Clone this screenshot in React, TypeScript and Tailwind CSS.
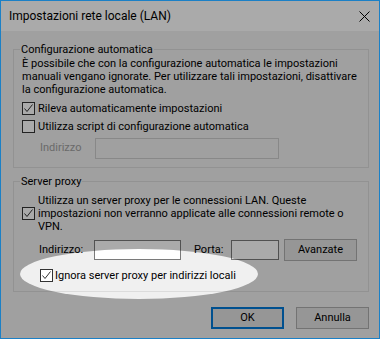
import React from 'react';

function CheckBox({ checked }: { checked?: boolean }) {
    return (
        <span className="flex h-[13px] w-[13px] shrink-0 items-center justify-center border border-[#333333] bg-white">
            {checked && (
                <svg width="11" height="11" viewBox="0 0 11 11">
                    <path d="M1.5 5.5 L4 8.5 L9.5 1.5" fill="none" stroke="#333333" strokeWidth="1" />
                </svg>
            )}
        </span>
    );
}

function Button({ label, primary }: { label: string; primary?: boolean }) {
    return (
        <div
            className={
                primary
                    ? 'flex h-[22px] w-[73px] items-center justify-center border-2 border-[#0078d7] bg-[#e1e1e1]'
                    : 'flex h-[22px] w-[73px] items-center justify-center border border-[#adadad] bg-[#e1e1e1]'
            }
        >
            {label}
        </div>
    );
}

export default function App() {
    return (
        <div
            className="relative flex h-[339px] w-[380px] flex-col overflow-hidden border border-[#1b80c6] bg-[#f0f0f0] text-[11px] text-black"
            style={{ fontFamily: 'Roboto, "Noto Sans", sans-serif' }}
        >
            {/* Title bar */}
            <div className="flex h-[30px] shrink-0 items-center justify-between bg-white pl-[8px] pr-[9px]">
                <span className="text-[12px] leading-[15px]">Impostazioni rete locale (LAN)</span>
                <svg width="11" height="11" viewBox="0 0 11 11">
                    <path d="M0.5 0.5 L10.5 10.5 M10.5 0.5 L0.5 10.5" stroke="#000" strokeWidth="1" />
                </svg>
            </div>

            <div className="flex flex-col pl-[12px] pr-[10px]">
                {/* Automatic configuration */}
                <fieldset className="mt-[11px] border border-[#dcdcdc] px-0 pb-[8px]">
                    <legend className="ml-[6px] px-[1px] leading-[15px]">Configurazione automatica</legend>
                    <div className="flex flex-col pl-[8px]">
                        <p className="whitespace-nowrap leading-[13px]">
                            È possibile che con la configurazione automatica le impostazioni
                            <br />
                            manuali vengano ignorate. Per utilizzare tali impostazioni, disattivare
                            <br />
                            la configurazione automatica.
                        </p>
                        <div className="mt-[6px] flex h-[13px] items-center gap-[3px]">
                            <CheckBox checked />
                            <span className="leading-[13px]">Rileva automaticamente impostazioni</span>
                        </div>
                        <div className="mt-[5px] flex h-[13px] items-center gap-[3px]">
                            <CheckBox />
                            <span className="leading-[13px]">Utilizza script di configurazione automatica</span>
                        </div>
                        <div className="mt-[5px] flex items-center pl-[18px]">
                            <span className="w-[55px] text-[#a0a0a0]">Indirizzo</span>
                            <div className="h-[21px] w-[184px] border border-[#cccccc] bg-[#f0f0f0]" />
                        </div>
                    </div>
                </fieldset>

                {/* Proxy server */}
                <fieldset className="mt-[6px] border border-[#dcdcdc] px-0 pb-[9px]">
                    <legend className="ml-[6px] px-[1px] leading-[15px]">Server proxy</legend>
                    <div className="flex flex-col pl-[8px] pt-[5px]">
                        <div className="flex items-center gap-[3px]">
                            <CheckBox checked />
                            <p className="whitespace-nowrap leading-[13px]">
                                Utilizza un server proxy per le connessioni LAN. Queste
                                <br />
                                impostazioni non verranno applicate alle connessioni remote o
                                <br />
                                VPN.
                            </p>
                        </div>
                        <div className="mt-[6px] flex items-center pl-[17px]">
                            <span className="w-[55px]">Indirizzo:</span>
                            <div className="h-[20px] w-[87px] border border-[#7a7a7a] bg-white" />
                            <span className="ml-[13px] w-[37px]">Porta:</span>
                            <div className="h-[20px] w-[48px] border border-[#7a7a7a] bg-white" />
                            <div className="ml-[5px]">
                                <Button label="Avanzate" />
                            </div>
                        </div>
                        <div className="mt-[8px] flex h-[13px] items-center gap-[2px] pl-[18px]">
                            <CheckBox checked />
                            <span className="leading-[13px]">Ignora server proxy per indirizzi locali</span>
                        </div>
                    </div>
                </fieldset>

                <div className="mt-[15px] flex justify-end gap-[12px]">
                    <Button label="OK" primary />
                    <Button label="Annulla" />
                </div>
            </div>

            {/* Dimming overlay with highlighted ellipse */}
            <div className="pointer-events-none absolute inset-0 overflow-hidden">
                <div className="absolute left-[19px] top-[248px] h-[50px] w-[238px] rounded-[50%] shadow-[0_0_0_600px_rgba(0,0,0,0.333)]" />
            </div>
        </div>
    );
}
